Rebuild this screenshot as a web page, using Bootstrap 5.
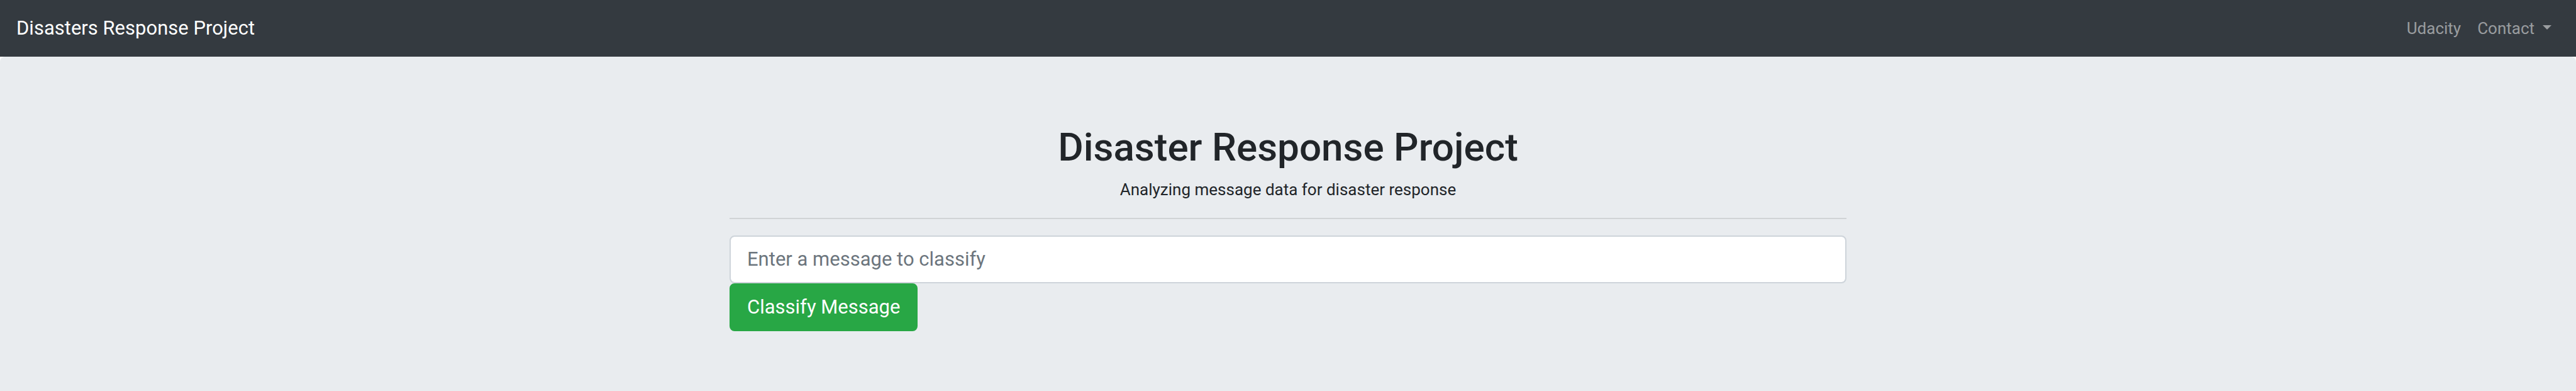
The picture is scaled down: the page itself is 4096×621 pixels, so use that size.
<!DOCTYPE html>
<html lang="en">
<head>
<meta charset="utf-8">
<meta name="viewport" content="width=device-width, initial-scale=1">
<title>Disasters Response Project</title>
<link href="https://cdn.jsdelivr.net/npm/bootstrap@5.3.0/dist/css/bootstrap.min.css" rel="stylesheet">
<style>
  body { font-family: Roboto, "Liberation Sans", sans-serif; font-size: 26px; line-height: 38px; color: #212529; background: #fff; }
  .site-nav { background: #343a40; padding: 13px 26px; --bs-navbar-nav-link-padding-x: 13px; }
  .site-nav .container-fluid { padding: 0; }
  .site-nav .navbar-brand { font-size: 31px; line-height: 48px; padding: 8px 0; margin: 0; color: #fff; }
  .site-nav .nav-link { font-size: 26px; line-height: 38px; padding: 13px; color: rgba(255,255,255,.5); }
  .site-nav .dropdown-toggle::after { border-width: 7px 7px 0; margin-left: 13px; vertical-align: 7px; }
  .hero { background: #e9ecef; border-radius: 8px; padding: 104px 26px; }
  .hero-body { max-width: 1776px; }
  .hero h1 { font-size: 62px; line-height: 80px; font-weight: 500; margin-bottom: 8px; }
  .hero hr { border-top: 2px solid #000; opacity: .1; margin: 26px 0; }
  .msg-field, .msg-btn { font-size: 31px; line-height: 48px; padding: 12px 26px; border-width: 2px; border-radius: 8px; }
  .msg-field { border-color: #ced4da; color: #495057; }
  .msg-field::placeholder { color: #6c757d; }
  .msg-btn { background: #28a745; border-color: #28a745; }
</style>
</head>
<body class="d-flex flex-column min-vh-100">
<nav class="navbar navbar-expand navbar-dark site-nav">
  <div class="container-fluid">
    <a class="navbar-brand" href="#">Disasters Response Project</a>
    <ul class="navbar-nav ms-auto">
      <li class="nav-item"><a class="nav-link" href="#">Udacity</a></li>
      <li class="nav-item dropdown">
        <a class="nav-link dropdown-toggle" href="#" role="button" data-bs-toggle="dropdown" aria-expanded="false">Contact</a>
      </li>
    </ul>
  </div>
</nav>
<main class="hero flex-grow-1">
  <div class="hero-body mx-auto">
    <div class="text-center">
      <h1>Disaster Response Project</h1>
      <p class="mb-0">Analyzing message data for disaster response</p>
    </div>
    <hr>
    <form>
      <input type="text" class="form-control msg-field" name="query" aria-label="Message" placeholder="Enter a message to classify">
      <button type="submit" class="btn btn-success msg-btn">Classify Message</button>
    </form>
  </div>
</main>
<script src="https://cdn.jsdelivr.net/npm/bootstrap@5.3.0/dist/js/bootstrap.bundle.min.js"></script>
</body>
</html>
